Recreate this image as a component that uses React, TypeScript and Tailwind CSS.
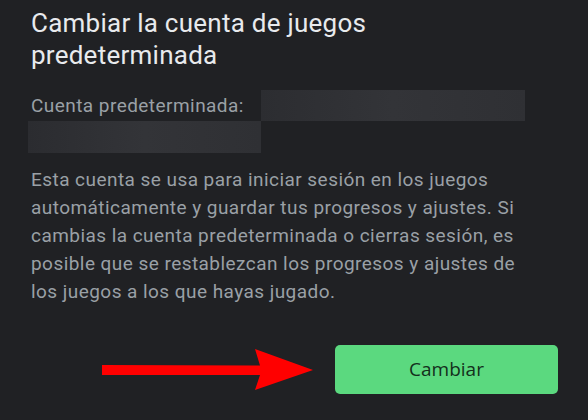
const RedArrow = () => (
  <svg width="214" height="42" viewBox="0 0 214 42" className="shrink-0">
    <path d="M0 16 L158 16.5 L153 0 L211 21 L153 41 L158 26 L0 26 Z" fill="#ff0000" />
  </svg>
);

export default function App() {
  return (
    <div className="w-[588px] h-[420px] overflow-hidden bg-[#202124] pl-[31px] pt-[7px]">
      <h1 className="text-[26px] leading-[32px] text-[#e8eaed] font-['Roboto',sans-serif] tracking-[0.25px]">
        Cambiar la cuenta de juegos
        <br />
        predeterminada
      </h1>

      {/* cuenta actual, oculta */}
      <div className="mt-[19px] flex items-center h-[31px]">
        <span className="text-[19px] leading-[28px] text-[#9aa0a6] font-['Roboto',sans-serif] tracking-[0.45px] w-[230px]">
          Cuenta predeterminada:
        </span>
        <span className="block w-[264px] h-[31px] bg-gradient-to-r from-[#2c2d31] via-[#333438] to-[#2f3034]" />
      </div>
      <div className="-ml-[3px] w-[233px] h-[32px] bg-gradient-to-r from-[#2b2c30] via-[#333438] to-[#2f3034]" />

      <p className="mt-[13px] w-[540px] text-[19px] leading-[28px] text-[#9aa0a6] font-['Roboto',sans-serif] tracking-[0.45px]">
        Esta cuenta se usa para iniciar sesión en los juegos
        <br />
        automáticamente y guardar tus progresos y ajustes. Si
        <br />
        cambias la cuenta predeterminada o cierras sesión, es
        <br />
        posible que se restablezcan los progresos y ajustes de
        <br />
        los juegos a los que hayas jugado.
      </p>

      <div className="mt-[39px] flex items-center">
        <div className="ml-[71px]">
          <RedArrow />
        </div>
        <button className="ml-[19px] w-[223px] h-[49px] rounded-[5px] bg-[#5bd97f] text-[#14301c] text-[19px] font-medium font-['Open_Sans',sans-serif]">
          Cambiar
        </button>
      </div>
    </div>
  );
}
